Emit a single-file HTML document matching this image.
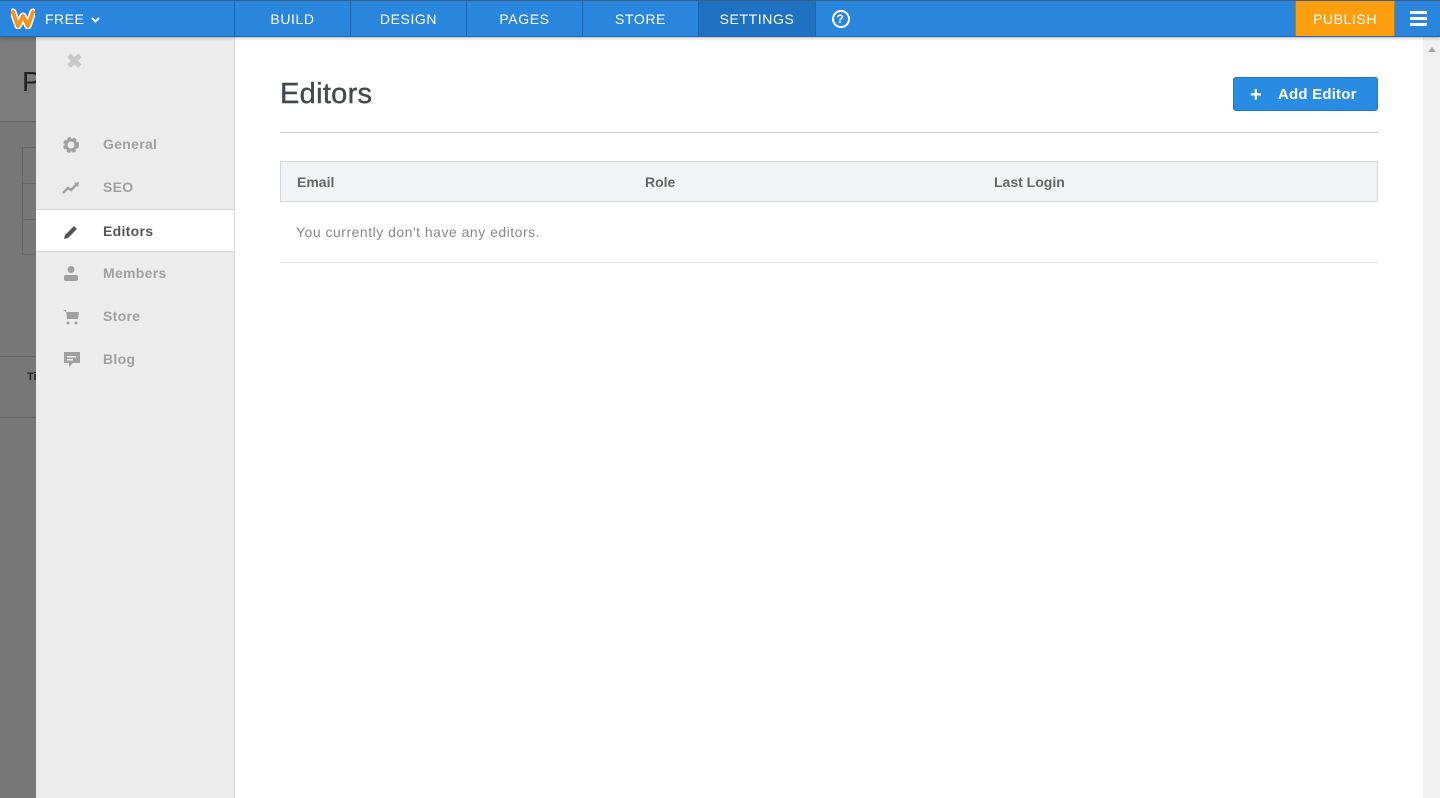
<!DOCTYPE html>
<html><head><style>
*{margin:0;padding:0;box-sizing:border-box}
body{width:1440px;height:798px;overflow:hidden;background:#777;font-family:"Liberation Sans",sans-serif;position:relative}
.top{position:absolute;left:0;top:0;width:1440px;height:37px;background:#2a86dc;border-bottom:1px solid #1a66b0;border-top:1px solid #3a5f85;z-index:5;box-shadow:0 1px 3px rgba(0,0,0,.3)}
.nav{position:absolute;top:0;height:35px;color:#fff;font-size:14px;letter-spacing:.6px;text-align:center;line-height:36px;border-left:1px solid #1b65ad}
.pub{position:absolute;left:1295px;top:0;width:100px;height:35px;background:#fd9e0f;color:#fff;font-size:14px;text-align:center;line-height:36px;letter-spacing:.6px;border-left:1px solid #c77a06;border-right:1px solid #c77a06}
.side{position:absolute;left:36px;top:37px;width:199px;height:761px;background:#ececec;border-right:1px solid #d8d8d8}
.item{position:absolute;left:0;width:198px;height:43px;line-height:43px;font-size:14px;font-weight:bold;color:#a0a0a0;padding-left:67px;letter-spacing:.3px}
.item svg{position:absolute;left:26px;top:13px}
.main{position:absolute;left:235px;top:37px;width:1188px;height:761px;background:#fff}
.scroll{position:absolute;left:1423px;top:37px;width:17px;height:761px;background:#f0f0f0}
</style></head><body>
<div style="position:absolute;left:0;top:37px;width:36px;height:85px;background:#7b7b7b;border-bottom:1px solid #666"></div>
<div style="position:absolute;left:22px;top:66px;font-size:28px;color:#222">P</div>
<div style="position:absolute;left:22px;top:147px;width:14px;height:108px;border:1px solid #666;border-right:none"></div>
<div style="position:absolute;left:22px;top:183px;width:14px;height:1px;background:#666"></div>
<div style="position:absolute;left:22px;top:219px;width:14px;height:1px;background:#666"></div>
<div style="position:absolute;left:0;top:356px;width:36px;height:1px;background:#666"></div>
<div style="position:absolute;left:27px;top:371px;font-size:11px;font-weight:bold;color:#222">Ti</div>
<div style="position:absolute;left:0;top:417px;width:36px;height:1px;background:#666"></div>
<div class="top">
 <svg style="position:absolute;left:11px;top:7px" width="24" height="21" viewBox="0 0 24 21"><path d="M2 4 L7 18 L12 8 L17 18 L22 4" fill="none" stroke="#fff" stroke-width="7" stroke-linecap="round" stroke-linejoin="round"/><path d="M2 4 L7 18 L12 8 L17 18 L22 4" fill="none" stroke="#f6911e" stroke-width="4" stroke-linecap="round" stroke-linejoin="round"/></svg>
 <div style="position:absolute;left:45px;top:0;line-height:36px;color:#fff;font-size:14px;letter-spacing:.5px">FREE <svg width="9" height="6" viewBox="0 0 9 6" style="vertical-align:middle;margin-left:2px"><path d="M1 1 L4.5 4.5 L8 1" fill="none" stroke="#fff" stroke-width="2"/></svg></div>
 <div class="nav" style="left:234px;width:116px">BUILD</div>
 <div class="nav" style="left:350px;width:116px">DESIGN</div>
 <div class="nav" style="left:466px;width:116px">PAGES</div>
 <div class="nav" style="left:582px;width:116px">STORE</div>
 <div class="nav" style="left:698px;width:117px;background:#1f72c2">SETTINGS</div>
 <div class="nav" style="left:815px;width:50px;border-right:none"><span style="display:inline-block;width:18px;height:18px;border:2px solid #fff;border-radius:50%;font-size:12px;line-height:14px;font-weight:bold;vertical-align:middle;margin-top:-3px">?</span></div>
 <div class="pub">PUBLISH</div>
 <div style="position:absolute;left:1410px;top:10px;width:17px;height:3px;background:#fff;box-shadow:0 6px 0 #fff,0 12px 0 #fff"></div>
</div>
<div class="side">
 <div style="position:absolute;left:30px;top:12px;font-size:20px;color:#c8c8c8;font-weight:bold">&#10006;</div>
 <div class="item" style="top:86px"><svg width="18" height="18" viewBox="0 0 18 18"><circle cx="9" cy="9" r="6" fill="none" stroke="#a0a0a0" stroke-width="4" stroke-dasharray="3 2"/><circle cx="9" cy="9" r="5" fill="none" stroke="#a0a0a0" stroke-width="3"/></svg>General</div>
 <div class="item" style="top:129px"><svg width="18" height="18" viewBox="0 0 18 18"><path d="M1 14 L6 9 L9 11 L15 5" fill="none" stroke="#a0a0a0" stroke-width="2.5"/><path d="M12 4 L17 3 L16 8Z" fill="#a0a0a0"/></svg>SEO</div>
 <div class="item" style="top:172px;background:#fff;color:#555;border-top:1px solid #d4d4d4;border-bottom:1px solid #d4d4d4"><svg width="18" height="18" viewBox="0 0 18 18"><path d="M2 16 L3 12 L12 3 L15 6 L6 15Z" fill="#555"/></svg>Editors</div>
 <div class="item" style="top:215px"><svg width="18" height="18" viewBox="0 0 18 18"><circle cx="9" cy="4.5" r="3.5" fill="#a0a0a0"/><rect x="2" y="10" width="14" height="6" rx="2" fill="#a0a0a0"/></svg>Members</div>
 <div class="item" style="top:258px"><svg width="18" height="18" viewBox="0 0 18 18"><path d="M1 2 H4 L5 11 H16 L17 4 H4" fill="#a0a0a0"/><circle cx="6" cy="15" r="1.5" fill="#a0a0a0"/><circle cx="14" cy="15" r="1.5" fill="#a0a0a0"/></svg>Store</div>
 <div class="item" style="top:301px"><svg width="20" height="18" viewBox="0 0 20 18"><path d="M2 1 H18 V12 H11 L7 16 V12 H2Z" fill="#a0a0a0"/><rect x="5" y="5" width="9" height="1.5" fill="#ececec"/><rect x="5" y="8" width="6" height="1.5" fill="#ececec"/></svg>Blog</div>
</div>
<div class="main">
 <div style="position:absolute;left:45px;top:41px;font-size:29px;color:#44494e;letter-spacing:.3px;-webkit-text-stroke:.4px #44494e">Editors</div>
 <div style="position:absolute;left:998px;top:40px;width:145px;height:34px;background:#2a8be3;border:1px solid #1f74c4;border-radius:3px;color:#fff;font-weight:bold;font-size:15px;line-height:34px;letter-spacing:.2px"><span style="position:absolute;left:16px;font-size:20px">+</span><span style="position:absolute;left:44px">Add Editor</span></div>
 <div style="position:absolute;left:45px;top:95px;width:1098px;height:1px;background:#ccc"></div>
 <div style="position:absolute;left:45px;top:124px;width:1098px;height:41px;background:#f2f3f5;border:1px solid #d5d8dc;font-size:14px;font-weight:bold;color:#666;line-height:40px">
  <span style="position:absolute;left:16px">Email</span><span style="position:absolute;left:364px">Role</span><span style="position:absolute;left:713px">Last Login</span></div>
 <div style="position:absolute;left:61px;top:187px;font-size:14px;color:#888;letter-spacing:.5px">You currently don't have any editors.</div>
 <div style="position:absolute;left:45px;top:225px;width:1098px;height:1px;background:#e3e3e3"></div>
</div>
<div class="scroll"><div style="position:absolute;left:5px;top:10px;border:4px solid transparent;border-bottom:5px solid #aaa;border-top:0"></div></div>
</body></html>
